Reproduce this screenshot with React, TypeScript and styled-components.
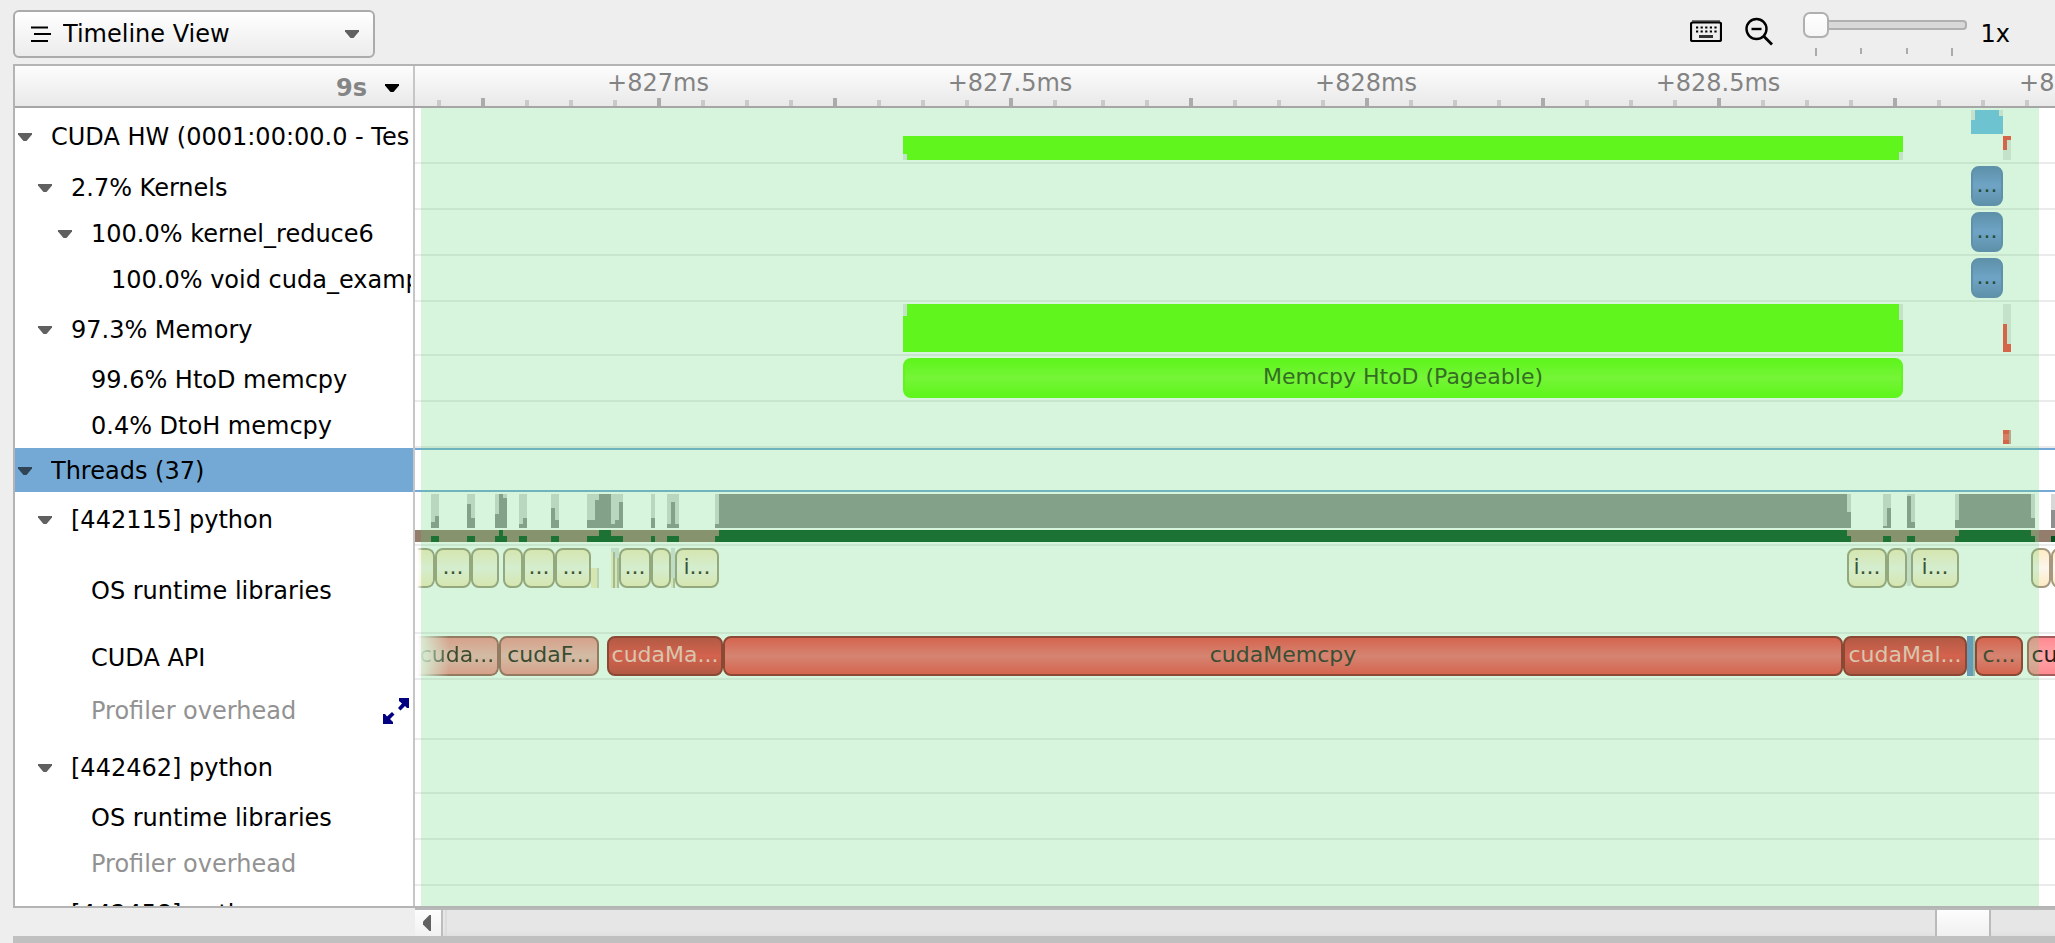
import React from "react";
import styled, { createGlobalStyle, css } from "styled-components";

const Global = createGlobalStyle`
  * { box-sizing: border-box; }
  body {
    margin: 0;
    background: #eeeeee;
    color: #000;
    font-family: "DejaVu Sans", sans-serif;
    font-size: 24px;
    overflow: hidden;
  }
  button, select { font: inherit; color: inherit; }
`;

const Page = styled.div`
  display: flex;
  flex-direction: column;
  height: 100vh;
  padding-left: 13px;
  overflow: hidden;
`;

const Toolbar = styled.header`
  display: flex;
  align-items: flex-start;
  justify-content: space-between;
  flex: none;
  height: 64px;
  padding: 10px 45px 0 0;
`;

const ViewPicker = styled.div`
  position: relative;
  width: 362px;
  height: 48px;
`;

const ViewSelect = styled.select`
  appearance: none;
  width: 100%;
  height: 100%;
  padding: 0 48px;
  border: 2px solid #ababab;
  border-radius: 6px;
  background: linear-gradient(#ffffff, #ececec);
`;

const PickerIcon = styled.svg`
  position: absolute;
  top: 16px;
  left: 18px;
  pointer-events: none;
`;

const PickerArrow = styled.svg`
  position: absolute;
  top: 20px;
  right: 16px;
  pointer-events: none;
`;

const Tools = styled.div`
  display: flex;
  align-items: flex-start;
`;

const IconButton = styled.button`
  display: flex;
  align-items: center;
  justify-content: center;
  width: 34px;
  height: 42px;
  margin-right: 19px;
  padding: 0;
  border: 0;
  background: none;
`;

const ZoomControl = styled.div`
  width: 164px;
  margin: 2px 14px 0 8px;
`;

const ZoomSlider = styled.input`
  display: block;
  appearance: none;
  width: 100%;
  height: 26px;
  margin: 0;
  background: none;

  &::-webkit-slider-runnable-track {
    height: 10px;
    border: 2px solid #b0b0b0;
    border-left-width: 0;
    border-radius: 4px;
    background: #d8d8d8;
  }
  &::-webkit-slider-thumb {
    appearance: none;
    width: 26px;
    height: 26px;
    margin-top: -10px;
    border: 2px solid #b0b0b0;
    border-radius: 7px;
    background: linear-gradient(#ffffff, #f6f6f6);
  }
`;

const SliderTicks = styled.div`
  display: flex;
  justify-content: space-between;
  margin-top: 10px;
  padding: 0 13px 0 12px;
`;

const SliderTick = styled.span<{ $long?: boolean }>`
  width: 2px;
  height: ${(p) => (p.$long ? 8 : 6)}px;
  background: #ababab;
`;

const ZoomValue = styled.output`
  line-height: 48px;
`;

const Panel = styled.main`
  display: flex;
  flex-direction: column;
  flex: 1;
  min-height: 0;
  border: solid #b4b4b4;
  border-width: 2px 0 2px 2px;
  background: #fff;
`;

const TreeCell = styled.div`
  flex: none;
  width: 400px;
  border-right: 2px solid #c6c6c6;
`;

const HeaderRow = styled.div`
  display: flex;
  flex: none;
  height: 42px;
  border-bottom: 2px solid #a6a6a6;
  background: linear-gradient(#fdfdfd, #e9e9e9);
`;

const OriginCell = styled(TreeCell)`
  display: flex;
  align-items: center;
  justify-content: flex-end;
  padding: 4px 14px 0 0;
`;

const OriginButton = styled.button`
  display: flex;
  align-items: center;
  gap: 18px;
  padding: 0;
  border: 0;
  background: none;
  color: #858585;
  font-weight: bold;
`;

const Ruler = styled.div`
  position: relative;
  flex: 1;
  overflow: hidden;
  color: #838383;
`;

const RulerTick = styled.span<{ $major: boolean }>`
  position: absolute;
  bottom: 0;
  width: 4px;
  height: ${(p) => (p.$major ? 8 : 6)}px;
  background: ${(p) => (p.$major ? "#ababab" : "#c9c9c9")};
`;

const RulerLabel = styled.span`
  position: absolute;
  top: 2px;
  line-height: 30px;
  transform: translateX(-50%);
  white-space: nowrap;
`;

const Body = styled.div`
  position: relative;
  flex: 1;
  min-height: 0;
  overflow: hidden;
`;

const Selection = styled.div`
  position: absolute;
  inset: 0 16px 0 406px;
  background: rgba(95, 217, 115, 0.25);
  pointer-events: none;
`;

const Row = styled.div<{ $height: number }>`
  display: flex;
  height: ${(p) => p.$height}px;
`;

const Label = styled(TreeCell)<{ $level: number; $muted?: boolean; $selected?: boolean }>`
  display: flex;
  align-items: center;
  padding: 2px 2px 0 ${(p) => 3 + p.$level * 20}px;
  color: ${(p) => (p.$muted ? "#929292" : "#000")};
  background: ${(p) => (p.$selected ? "#74a9d5" : "#fff")};
`;

const Toggle = styled.button`
  display: flex;
  flex: none;
  width: 33px;
  padding: 0;
  border: 0;
  background: none;
`;

const LabelText = styled.span`
  flex: 1;
  overflow: hidden;
  white-space: nowrap;
`;

const ExpandButton = styled.button`
  display: flex;
  padding: 0 2px 0 0;
  border: 0;
  background: none;
`;

const Track = styled.div<{ $selected?: boolean }>`
  position: relative;
  flex: 1;
  overflow: hidden;
  border-bottom: 2px solid #ebebeb;
  ${(p) =>
    p.$selected &&
    css`
      border-top: 2px solid #74a8d5;
      border-bottom-color: #74a8d5;
    `}
`;

type Tone = "kernel" | "copy" | "os" | "light" | "malloc" | "memcpy" | "pink";

const tones: Record<Tone, { edge: string; mid: string; line: string; text: string }> = {
  kernel: { edge: "#5f7bbd", mid: "#7493e1", line: "#5f7bbd", text: "#10201c" },
  copy: { edge: "#5fff00", mid: "#7dff23", line: "#5fff00", text: "#244b07" },
  os: { edge: "#fdebc4", mid: "#fbf5ed", line: "#a5987f", text: "#302a20" },
  light: { edge: "#ff9094", mid: "#f9b3b5", line: "#a55c5c", text: "#301c18" },
  malloc: { edge: "#cf3135", mid: "#fb3c43", line: "#981920", text: "#ffc1bf" },
  memcpy: { edge: "#fd3f44", mid: "#fc6971", line: "#981920", text: "#30201c" },
  pink: { edge: "#ff8a92", mid: "#ffa5aa", line: "#a55c5c", text: "#301c18" },
};

const Event = styled.div<{ $tone: Tone; $fade?: number }>`
  position: absolute;
  top: 2px;
  height: 40px;
  overflow: hidden;
  border: 2px solid ${(p) => tones[p.$tone].line};
  border-radius: 8px;
  background: linear-gradient(
    ${(p) => tones[p.$tone].edge},
    ${(p) => tones[p.$tone].mid} 50%,
    ${(p) => tones[p.$tone].edge}
  );
  color: ${(p) => tones[p.$tone].text};
  font-size: 22px;
  line-height: 34px;
  text-align: center;
  white-space: nowrap;
  ${(p) =>
    p.$fade &&
    css`
      border-left: 0;
      border-radius: 0 8px 8px 0;
      mask-image: linear-gradient(90deg, transparent, #000 ${p.$fade}px);
    `}
`;

const Chart = styled.svg`
  position: absolute;
  top: 0;
  left: 0;
`;

const Scrollbar = styled.div`
  display: flex;
  flex: none;
  height: 28px;
  margin-left: 402px;
  border-top: 2px solid #b8b8b8;
  background: linear-gradient(#e6e6e6 80%, #e0e0e0);
`;

const ScrollButton = styled.button`
  display: flex;
  align-items: center;
  justify-content: center;
  width: 28px;
  padding: 0 2px 0 0;
  border: 0;
  border-right: 2px solid #bdbdbd;
  background: linear-gradient(#fdfdfd, #f1f1f1);
`;

const ScrollGap = styled.div`
  flex: 1;
  margin-left: 2px;
  border-left: 2px solid #dcdcdc;
`;

const ScrollThumb = styled.div`
  width: 56px;
  margin-right: 64px;
  border: solid #bababa;
  border-width: 0 2px;
  background: linear-gradient(#fdfdfd, #f0f0f0);
`;

const BottomEdge = styled.div`
  flex: none;
  height: 7px;
  background: #c0c0c0;
`;

const DownArrow = ({ color = "#606060" }: { color?: string }) => (
  <svg width="14" height="8" viewBox="0 0 14 8" aria-hidden="true">
    <path d="M0 0H14V1.5L8.5 8H5.5L0 1.5Z" fill={color} />
  </svg>
);

const Expand = () => (
  <svg width="26" height="26" viewBox="0 0 26 26" aria-hidden="true" fill="#000080">
    <path d="M16 0H26V10H24L22 8L17.500 12.500L15 10L19 5.500L16 3Z" />
    <path d="M10 26H0V16H2L4 18.500L9 14L11.500 16.500L7 21L10 24Z" />
  </svg>
);

type Ev = { x: number; w: number; tone: Tone; text?: string; fade?: number };
type Rect = [x: number, y: number, w: number, h: number, fill: string];
type RowData = {
  label: string;
  level: number;
  height: number;
  leaf?: boolean;
  muted?: boolean;
  selected?: boolean;
  expand?: boolean;
  events?: Ev[];
  rects?: Rect[];
};

const GREEN = "#5fff00";
const RED = "#fd3f3b";
const CYAN = "#73bdef";
const PALE = "#e6e6e6";

// CPU load samples of the main thread: position, width and height out of 34.
const load: [number, number, number][] = [
  [16, 4, 6], [20, 4, 12],
  [52, 4, 24], [56, 4, 10],
  [80, 4, 14], [84, 4, 34], [88, 4, 30],
  [104, 4, 4], [108, 4, 10],
  [136, 4, 20], [140, 4, 8],
  [172, 8, 8], [180, 4, 28], [184, 12, 34], [196, 4, 4], [200, 4, 8], [204, 4, 26],
  [236, 4, 10],
  [252, 4, 4], [256, 4, 26], [260, 4, 4],
  [300, 4, 4], [304, 1128, 34], [1432, 4, 16],
  [1468, 4, 2], [1472, 4, 20],
  [1492, 4, 32], [1496, 4, 6],
  [1540, 4, 8], [1544, 72, 34], [1616, 4, 10],
  [1636, 4, 18],
];

const loadRects: Rect[] = [
  [0, 38, 4000, 12, "#947d6d"],
  ...load.flatMap(([x, w, h]): Rect[] => [
    [x, 2, w, 34, "#d7d7d7"],
    [x, 36 - h, w, h, "#8f8f8f"],
    h === 34 ? [x, 38, w, 12, "#05501f"] : [x, 44, w, 6, "#05501f"],
  ]),
];

const kernel: Ev[] = [{ x: 1556, w: 32, tone: "kernel", text: "..." }];

const rows: RowData[] = [
  {
    label: "CUDA HW (0001:00:00.0 - Tesla", level: 0, height: 56,
    rects: [
      [488, 28, 1000, 24, GREEN], [488, 46, 4, 6, PALE], [1484, 44, 4, 8, PALE],
      [1556, 2, 32, 24, CYAN], [1556, 2, 4, 10, PALE], [1584, 2, 4, 6, PALE],
      [1588, 28, 8, 24, PALE], [1588, 28, 8, 4, RED], [1588, 28, 4, 14, RED],
    ],
  },
  { label: "2.7% Kernels", level: 1, height: 46, events: kernel },
  { label: "100.0% kernel_reduce6", level: 2, height: 46, events: kernel },
  { label: "100.0% void cuda_example", level: 3, height: 46, leaf: true, events: kernel },
  {
    label: "97.3% Memory", level: 1, height: 54,
    rects: [
      [488, 2, 1000, 48, GREEN], [488, 2, 4, 12, PALE], [1484, 2, 4, 16, PALE],
      [1588, 2, 8, 48, PALE], [1588, 22, 4, 28, RED], [1588, 42, 8, 8, RED],
    ],
  },
  {
    label: "99.6% HtoD memcpy", level: 2, height: 46, leaf: true,
    events: [{ x: 488, w: 1000, tone: "copy", text: "Memcpy HtoD (Pageable)" }],
  },
  {
    label: "0.4% DtoH memcpy", level: 2, height: 46, leaf: true,
    rects: [[1588, 28, 6, 14, RED], [1588, 32, 6, 6, "#fc5f60"], [1594, 28, 2, 14, "#d39a92"]],
  },
  { label: "Threads (37)", level: 0, height: 44, selected: true },
  { label: "[442115] python", level: 1, height: 54, rects: loadRects },
  {
    label: "OS runtime libraries", level: 2, height: 88, leaf: true,
    rects: [
      [176, 22, 6, 20, "#fdebc4"], [182, 22, 2, 20, "#d3d3c9"],
      [196, 2, 8, 40, "#dfdfdf"], [196, 6, 2, 36, "#fdebc4"], [198, 6, 2, 36, "#b5b0a0"], [200, 12, 4, 30, "#fdebc4"], [202, 12, 2, 30, "#c0b8a8"],
      [256, 2, 4, 30, "#dfdfdf"], [256, 32, 2, 10, "#fdebc4"], [258, 32, 2, 10, "#c0b8a8"],
      [1492, 2, 4, 38, "#dfdfdf"],
    ],
    events: [
      { x: 2, w: 18, tone: "os", fade: 6 },
      { x: 20, w: 36, tone: "os", text: "..." },
      { x: 56, w: 28, tone: "os" },
      { x: 88, w: 20, tone: "os" },
      { x: 108, w: 32, tone: "os", text: "..." },
      { x: 140, w: 36, tone: "os", text: "..." },
      { x: 204, w: 32, tone: "os", text: "..." },
      { x: 236, w: 20, tone: "os" },
      { x: 260, w: 44, tone: "os", text: "i..." },
      { x: 1432, w: 40, tone: "os", text: "i..." },
      { x: 1472, w: 20, tone: "os" },
      { x: 1496, w: 48, tone: "os", text: "i..." },
      { x: 1616, w: 20, tone: "os" },
      { x: 1636, w: 40, tone: "os" },
    ],
  },
  {
    label: "CUDA API", level: 2, height: 46, leaf: true,
    rects: [[1552, 2, 6, 40, "#6a88cf"], [1558, 2, 2, 40, "#a9b6b6"]],
    events: [
      { x: 2, w: 82, tone: "light", text: "cuda...", fade: 32 },
      { x: 84, w: 100, tone: "light", text: "cudaF..." },
      { x: 192, w: 116, tone: "malloc", text: "cudaMa..." },
      { x: 308, w: 1120, tone: "memcpy", text: "cudaMemcpy" },
      { x: 1428, w: 124, tone: "malloc", text: "cudaMal..." },
      { x: 1560, w: 48, tone: "memcpy", text: "c..." },
      { x: 1612, w: 56, tone: "pink", text: "cu..." },
    ],
  },
  { label: "Profiler overhead", level: 2, height: 60, leaf: true, muted: true, expand: true },
  { label: "[442462] python", level: 1, height: 54 },
  { label: "OS runtime libraries", level: 2, height: 46, leaf: true },
  { label: "Profiler overhead", level: 2, height: 46, leaf: true, muted: true },
  { label: "[442458] python", level: 1, height: 54 },
];

// The ruler snaps its ticks to a four pixel raster; every fourth one is major.
const ticks = Array.from({ length: 60 }, (_, i) => ({
  x: 22 + Math.round((i * 44.14) / 4) * 4,
  major: i % 4 === 1,
}));

const rulerLabels = [
  { x: 243, text: "+827ms" },
  { x: 595, text: "+827.5ms" },
  { x: 951, text: "+828ms" },
  { x: 1303, text: "+828.5ms" },
  { x: 1655, text: "+829ms" },
];

const TimelineRow = ({ row }: { row: RowData }) => (
  <Row $height={row.height}>
    <Label $level={row.level} $muted={row.muted} $selected={row.selected}>
      <Toggle as={row.leaf ? "span" : "button"} aria-label={row.leaf ? undefined : `Collapse ${row.label}`}>
        {!row.leaf && <DownArrow color={row.selected ? "#2f4456" : undefined} />}
      </Toggle>
      <LabelText>{row.label}</LabelText>
      {row.expand && (
        <ExpandButton aria-label="Expand row">
          <Expand />
        </ExpandButton>
      )}
    </Label>
    <Track $selected={row.selected}>
      {row.rects && (
        <Chart width="100%" height="100%" shapeRendering="crispEdges" aria-hidden="true">
          {row.rects.map(([x, y, width, height, fill], i) => (
            <rect key={i} x={x} y={y} width={width} height={height} fill={fill} />
          ))}
        </Chart>
      )}
      {row.events?.map((e) => (
        <Event key={e.x} $tone={e.tone} $fade={e.fade} style={{ left: e.x, width: e.w }}>
          {e.text}
        </Event>
      ))}
    </Track>
  </Row>
);

export default function App() {
  return (
    <Page>
      <Global />
      <Toolbar>
        <ViewPicker>
          <ViewSelect aria-label="View" defaultValue="timeline">
            <option value="timeline">Timeline View</option>
          </ViewSelect>
          <PickerIcon width="20" height="16" viewBox="0 0 20 16" aria-hidden="true">
            <path d="M0 1.500H17M3 8H20M0 15H17" stroke="#000" strokeWidth="2.200" />
          </PickerIcon>
          <PickerArrow width="14" height="8" viewBox="0 0 14 8" aria-hidden="true">
            <path d="M0 0H14V1.500L8.500 8H5.500L0 1.500Z" fill="#606060" />
          </PickerArrow>
        </ViewPicker>
        <Tools>
          <IconButton aria-label="Keyboard shortcuts">
            <svg width="32" height="22" viewBox="0 0 32 22" aria-hidden="true">
              <path d="M2 1H30" stroke="#777" strokeWidth="2" />
              <rect x="1" y="2.500" width="30" height="18.500" rx="1.500" fill="none" stroke="#000" strokeWidth="2.200" />
              <path d="M6 7.500H27M6 11.500H27" stroke="#000" strokeWidth="2" strokeDasharray="2.200 2.400" />
              <path d="M9 16.500H23" stroke="#333" strokeWidth="3" />
            </svg>
          </IconButton>
          <IconButton aria-label="Zoom out">
            <svg width="28" height="30" viewBox="0 0 28 30" aria-hidden="true" fill="none" stroke="#000">
              <circle cx="11.500" cy="13" r="10" strokeWidth="2.400" />
              <path d="M6.500 13H16.500" strokeWidth="2.400" />
              <path d="M18.500 20L27 28.500" strokeWidth="2.800" />
            </svg>
          </IconButton>
          <ZoomControl>
            <ZoomSlider type="range" aria-label="Zoom" min={1} max={100} defaultValue={1} />
            <SliderTicks>
              <SliderTick $long />
              <SliderTick />
              <SliderTick />
              <SliderTick $long />
            </SliderTicks>
          </ZoomControl>
          <ZoomValue>1x</ZoomValue>
        </Tools>
      </Toolbar>
      <Panel>
        <HeaderRow>
          <OriginCell>
            <OriginButton>
              9s
              <DownArrow color="#000" />
            </OriginButton>
          </OriginCell>
          <Ruler>
            {ticks.map((t) => (
              <RulerTick key={t.x} $major={t.major} style={{ left: t.x }} />
            ))}
            {rulerLabels.map((l) => (
              <RulerLabel key={l.text} style={{ left: l.x }}>
                {l.text}
              </RulerLabel>
            ))}
          </Ruler>
        </HeaderRow>
        <Body>
          {rows.map((row, i) => (
            <TimelineRow key={i} row={row} />
          ))}
          <Selection />
        </Body>
      </Panel>
      <Scrollbar>
        <ScrollButton aria-label="Scroll left">
          <svg width="8" height="16" viewBox="0 0 8 16" aria-hidden="true">
            <path d="M8 0V16H6.500L0 9.500V6.500L6.500 0Z" fill="#606060" />
          </svg>
        </ScrollButton>
        <ScrollGap />
        <ScrollThumb />
      </Scrollbar>
      <BottomEdge />
    </Page>
  );
}
